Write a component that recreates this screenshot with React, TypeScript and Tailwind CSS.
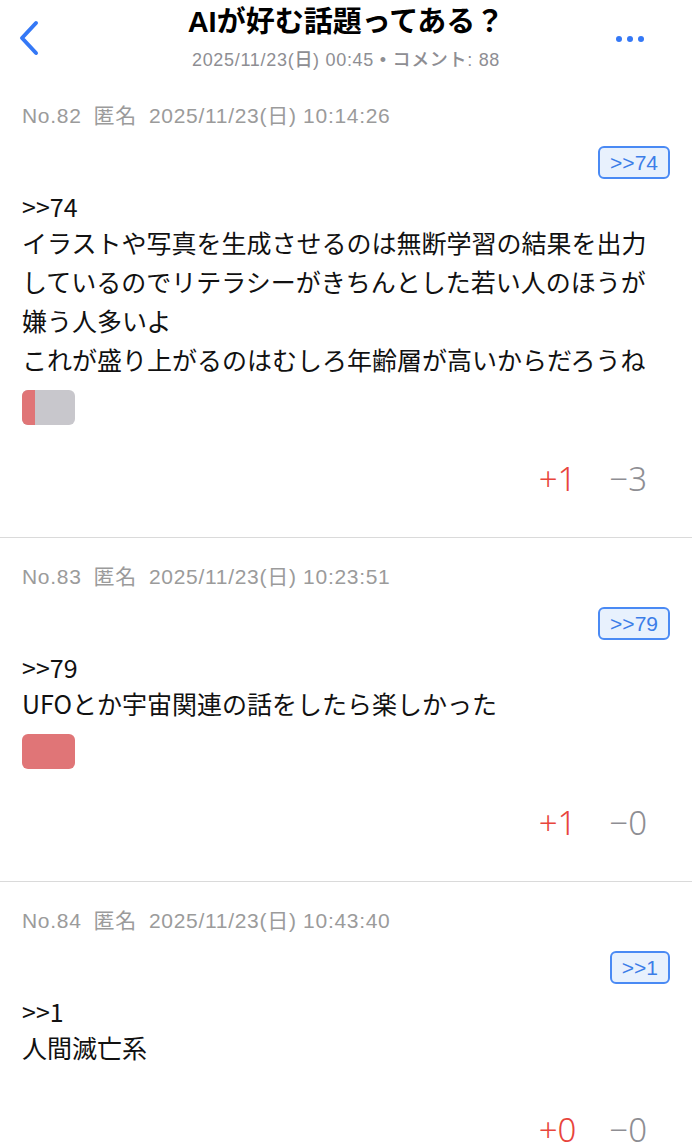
import React from "react";

type Post = {
  no: number;
  date: string;
  anchor: string;
  lines: string[];
  up: number;
  down: number;
  showBar: boolean;
};

const posts: Post[] = [
  {
    no: 82,
    date: "2025/11/23(日) 10:14:26",
    anchor: ">>74",
    lines: [
      "イラストや写真を生成させるのは無断学習の結果を出力しているのでリテラシーがきちんとした若い人のほうが嫌う人多いよ",
      "これが盛り上がるのはむしろ年齢層が高いからだろうね",
    ],
    up: 1,
    down: 3,
    showBar: true,
  },
  {
    no: 83,
    date: "2025/11/23(日) 10:23:51",
    anchor: ">>79",
    lines: ["UFOとか宇宙関連の話をしたら楽しかった"],
    up: 1,
    down: 0,
    showBar: true,
  },
  {
    no: 84,
    date: "2025/11/23(日) 10:43:40",
    anchor: ">>1",
    lines: ["人間滅亡系"],
    up: 0,
    down: 0,
    showBar: false,
  },
];

const latin = { fontFamily: '"Liberation Sans", "Noto Sans CJK JP", sans-serif' };
const jp = { fontFamily: '"Noto Sans CJK JP", sans-serif' };

function VoteBar({ up, down }: { up: number; down: number }) {
  const total = up + down;
  const pct = total === 0 ? 0 : (up / total) * 100;
  return (
    <div className="mt-[11px] flex h-[35px] w-[53px] overflow-hidden rounded-[6px] bg-[#c8c7cc]">
      <div className="h-full bg-[#e07577]" style={{ width: `${pct}%` }} />
    </div>
  );
}

function PostItem({ p, last }: { p: Post; last: boolean }) {
  return (
    <div className={`px-[22px] pt-[27px] ${last ? "pb-0" : "pb-[40px] border-b border-[#dadada]"}`}>
      <div className="flex h-[24px] items-center gap-[12px] text-[21px] tracking-[0.7px] text-[#9b9b9b]" style={latin}>
        <span>No.{p.no}</span>
        <span>匿名</span>
        <span>{p.date}</span>
      </div>
      <div className="mt-[18px] flex justify-end">
        <div
          className="flex h-[33px] items-center justify-center rounded-[6px] border-2 border-[#4a8af4] bg-[#e8f1fd] px-[10px] text-[21px] text-[#3b7de8]"
          style={latin}
        >
          {p.anchor}
        </div>
      </div>
      <div className="mt-[10px] text-[25px] text-[#111111]" style={jp}>
        <div className="leading-[34px]">{p.anchor}</div>
        {p.lines.map((l, i) => (
          <div key={i} className="leading-[39px]">
            {l}
          </div>
        ))}
      </div>
      {p.showBar && <VoteBar up={p.up} down={p.down} />}
      <div
        className={`${p.showBar ? "mt-[36px]" : "mt-[45px]"} flex h-[36px] items-center justify-end gap-[33px] pr-[23px] text-[33px] font-light leading-[34px]`}
        style={{ fontFamily: '"Noto Sans", "Liberation Sans", sans-serif' }}
      >
        <span className="text-[#e8453c]">+{p.up}</span>
        <span className="text-[#8e8e93]">−{p.down}</span>
      </div>
    </div>
  );
}

export default function App() {
  return (
    <div className="h-[1148px] w-[692px] overflow-hidden bg-white">
      <header className="relative flex h-[77px] flex-col items-center pt-[4px]">
        <button className="absolute left-[16px] top-[20px] flex h-[36px] w-[26px] items-center justify-center">
          <svg width="24" height="36" viewBox="0 0 24 36" fill="none">
            <path d="M19 3 L5 18 L19 33" stroke="#3478f6" strokeWidth="4" strokeLinecap="round" strokeLinejoin="round" />
          </svg>
        </button>
        <div className="text-[29px] font-bold leading-[36px] text-black" style={latin}>
          AIが好む話題ってある？
        </div>
        <div className="mt-[8px] text-[18px] font-medium leading-[24px] tracking-[0.7px] text-[#8e8e93]" style={latin}>
          2025/11/23(日) 00:45 • コメント: 88
        </div>
        <div className="absolute right-[48px] top-[36px] flex gap-[5px]">
          <span className="h-[6px] w-[6px] rounded-full bg-[#3478f6]" />
          <span className="h-[6px] w-[6px] rounded-full bg-[#3478f6]" />
          <span className="h-[6px] w-[6px] rounded-full bg-[#3478f6]" />
        </div>
      </header>
      {posts.map((p, i) => (
        <PostItem key={p.no} p={p} last={i === posts.length - 1} />
      ))}
    </div>
  );
}
